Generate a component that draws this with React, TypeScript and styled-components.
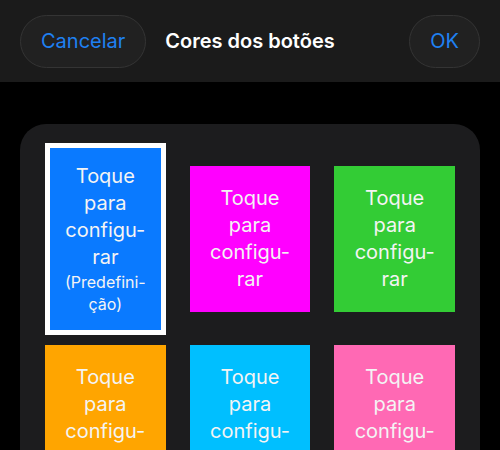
import styled, { createGlobalStyle } from 'styled-components';

const GlobalStyle = createGlobalStyle`
  html, body {
    margin: 0;
    padding: 0;
    background: #000;
    overflow: hidden;
  }
  body {
    font-family: Inter, "Noto Sans", "Liberation Sans", sans-serif;
  }
`;

type TileData = {
  color: string;
  lines: string[];
  note?: string[];
  selected?: boolean;
};

const baseLines = ['Toque', 'para', 'configu-', 'rar'];

const tiles: TileData[] = [
  { color: '#0a7aff', lines: baseLines, note: ['(Predefini-', 'ção)'], selected: true },
  { color: '#ff00ff', lines: baseLines },
  { color: '#33cc35', lines: baseLines },
  { color: '#ffa500', lines: baseLines },
  { color: '#00bfff', lines: baseLines },
  { color: '#ff69b4', lines: baseLines },
];

function App() {
  return (
    <Page>
      <GlobalStyle />
      <Header>
        <PillButton $side="start">Cancelar</PillButton>
        <Title>Cores dos botões</Title>
        <PillButton $side="end">OK</PillButton>
      </Header>
      <Panel>
        <Grid>
          {tiles.map((tile, key) => (
            <Tile key={key} $color={tile.color} $selected={tile.selected}>
              {tile.lines.map((line, i) => (
                <Line key={i}>{line}</Line>
              ))}
              {tile.note &&
                tile.note.map((line, i) => <Note key={i}>{line}</Note>)}
            </Tile>
          ))}
        </Grid>
      </Panel>
    </Page>
  );
}

export default App;

const Page = styled.div`
  width: 500px;
  height: 450px;
  overflow: hidden;
  background: #000;
`;

const Header = styled.div`
  height: 82px;
  box-sizing: border-box;
  padding: 0 20px;
  background: #1b1b1b;
  display: grid;
  grid-template-columns: 1fr auto 1fr;
  align-items: center;
`;

const PillButton = styled.div<{ $side: 'start' | 'end' }>`
  justify-self: ${({ $side }) => $side};
  height: 53px;
  box-sizing: border-box;
  padding: 0 20px;
  display: flex;
  align-items: center;
  border-radius: 27px;
  background: #212121;
  border: 1px solid #343434;
  color: #1f80f2;
  font-size: 20px;
`;

const Title = styled.div`
  color: #fff;
  font-size: 20px;
  font-weight: 600;
`;

const Panel = styled.div`
  margin: 42px 20px 0;
  padding: 19px 25px;
  background: #1c1c1e;
  border-radius: 26px;
  height: 400px;
`;

const Grid = styled.div`
  display: grid;
  grid-template-columns: repeat(3, 1fr);
  column-gap: 24px;
  row-gap: 10px;
  align-items: center;
`;

const Tile = styled.div<{ $color: string; $selected?: boolean }>`
  height: ${({ $selected }) => ($selected ? '192px' : '146px')};
  box-sizing: border-box;
  background: ${({ $color }) => $color};
  border: ${({ $selected }) => ($selected ? '5px solid #fff' : 'none')};
  display: flex;
  flex-direction: column;
  align-items: center;
  justify-content: center;
  color: #f4f4f4;
  text-align: center;
  white-space: nowrap;
`;

const Line = styled.div`
  font-size: 20px;
  line-height: 27px;
`;

const Note = styled.div`
  font-size: 16px;
  line-height: 22px;
`;
